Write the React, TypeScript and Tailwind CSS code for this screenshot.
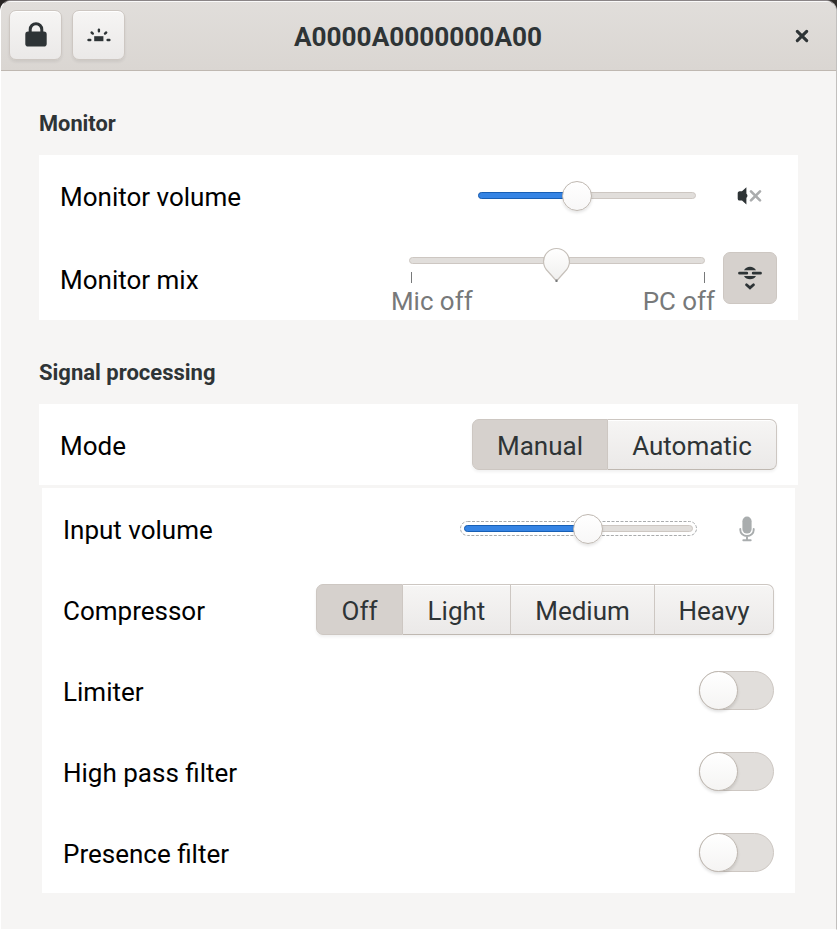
import type { ReactNode } from "react";

const raised =
  "bg-gradient-to-b from-[#f6f5f4] to-[#ebe9e8] border border-[#cdc7c2] shadow-[inset_0_1px_0_#fff,0_2px_3px_rgba(0,0,0,0.07)]";

function LockIcon() {
  return (
    <svg width="22" height="26" viewBox="0 0 22 26" fill="none">
      <path d="M5.2 11V7.5a5.8 5.8 0 0 1 11.6 0V11" stroke="#2e3436" strokeWidth="3" />
      <rect x="0.3" y="9.6" width="21.4" height="15" rx="2.8" fill="#2e3436" />
    </svg>
  );
}

function LightIcon() {
  return (
    <svg width="24" height="14" viewBox="0 0 24 14" fill="none" stroke="#2e3436" strokeWidth="2.4" strokeLinecap="round">
      <rect x="7.2" y="8.2" width="9.2" height="5" fill="#2e3436" stroke="none" />
      <path d="M11.9 1.6v1.6M4.6 4.5l1.2 1.1M19.2 4.5L18 5.6M1.5 12h1.8M20.6 12h1.8" />
    </svg>
  );
}

function CloseIcon() {
  return (
    <svg width="14" height="14" viewBox="0 0 14 14" stroke="#2e3436" strokeWidth="3.1" strokeLinecap="round">
      <path d="M2.3 2.3l9.4 9.4M11.7 2.3l-9.4 9.4" />
    </svg>
  );
}

function MutedIcon() {
  return (
    <svg width="26" height="18" viewBox="0 0 26 18" fill="none">
      <path d="M2.6 4.2H5L9.4.2v17.2L5 13.6H2.6C1.4 13.6.7 12.6.7 11.4V6.4c0-1.2.7-2.2 1.9-2.2z" fill="#2e3436" />
      <path d="M9 6.8c1.9.4 1.9 3.6 0 4z" fill="#2e3436" />
      <path d="M14 4.4l9 9M23 4.4l-9 9" stroke="#aaacad" strokeWidth="2.7" strokeLinecap="round" />
    </svg>
  );
}

function MixIcon() {
  return (
    <svg width="24" height="24" viewBox="0 0 24 24" fill="none" stroke="#2e3436" strokeWidth="2.8" strokeLinecap="round">
      <path d="M6 4.200C7.200 1.900 9.400.700 12 .700S16.800 1.900 18 4.200z" fill="#2e3436" stroke="none" />
      <path d="M6 10c1.200 2.200 3.400 3.300 6 3.300s4.800-1.100 6-3.300z" fill="#2e3436" stroke="none" />
      <path d="M1.500 7.200H8.800M15.200 7.200h7.300" />
      <path d="M8.500 18.800l3.500 3 3.500-3" />
    </svg>
  );
}

function MicIcon() {
  return (
    <svg width="16" height="26" viewBox="0 0 16 26" fill="none">
      <rect x="3.400" y="0.600" width="9.200" height="17" rx="4.600" fill="#a9adae" />
      <path d="M1.300 13v.900a6.700 6.100 0 0 0 13.400 0V13M8 20v4M4.300 24.200h7.400" stroke="#a9adae" strokeWidth="1.900" strokeLinecap="round" />
    </svg>
  );
}

function Track({ width, fill }: { width: string; fill?: string }) {
  return (
    <div className={`${width} relative h-[7px] rounded-full border border-[#cdc7c2] bg-[#e1dedb]`}>
      {fill && (
        <>
          <div className={`${fill} absolute -top-px -left-px h-[7px] rounded-l-full border border-[#185fb4] bg-[#3584e4]`} />
          <div className={`${fill} absolute -top-[12px] -left-px flex justify-end`}>
            <div className="-mr-[15px] size-[30px] shrink-0 rounded-full border border-[#bfb8b1] bg-gradient-to-b from-white to-[#f8f7f7] shadow-[0_2px_3px_rgba(0,0,0,0.1)]" />
          </div>
        </>
      )}
    </div>
  );
}

function Row({ label, children, className = "h-[81px] pr-[21px]" }: { label: string; children: ReactNode; className?: string }) {
  return (
    <div className={`flex items-center pl-[21px] ${className}`}>
      <span className="mr-auto pt-[3px] text-black">{label}</span>
      {children}
    </div>
  );
}

function Segments({ items }: { items: { label: string; width: string }[] }) {
  return (
    <div className="flex h-[51px] rounded-[7px] shadow-[0_2px_3px_rgba(0,0,0,0.06)]">
      {items.map((item, i) => (
        <button
          key={item.label}
          className={`${item.width} border border-[#cdc7c2] pt-[3px] text-center ${i > 0 ? "border-l-0 border-b-[#bfb8b1]" : ""} ${
            i === 0
              ? "rounded-l-[7px] bg-[#d6d1cd]"
              : "bg-gradient-to-b from-[#f6f5f4] to-[#ebe9e8] shadow-[inset_0_1px_0_#fff]"
          } ${i === items.length - 1 ? "rounded-r-[7px]" : ""}`}
        >
          {item.label}
        </button>
      ))}
    </div>
  );
}

function Switch() {
  return (
    <div className="h-[39px] w-[75px] rounded-full border border-[#cdc7c2] bg-[#e1dedb]">
      <div className="-mt-px -ml-px size-[39px] rounded-full border border-[#bfb8b1] bg-gradient-to-b from-white to-[#f5f4f3] shadow-[0_2px_3px_rgba(0,0,0,0.12)]" />
    </div>
  );
}

export default function App() {
  return (
    <div className="h-[930px] w-[837px] overflow-hidden bg-gradient-to-r from-[#2a2625] to-[#302d2a] font-['Roboto',sans-serif] text-[26px] leading-[30px] text-[#2e3436]">
      <div className="flex h-[930px] flex-col overflow-hidden rounded-t-[11px] border-t border-r border-b border-l border-t-[#8a8587] border-r-[#c2c0be] border-b-white border-l-white bg-[#f6f5f4]">
        <header className="flex h-[70px] shrink-0 items-center border-b border-[#bfb8b1] bg-gradient-to-b from-[#e1dedb] to-[#dad6d2] pb-px pl-[8px] shadow-[inset_0_1px_0_#fafafa]">
          <button className={`${raised} flex h-[50px] w-[53px] items-center justify-center rounded-[7px]`}>
            <LockIcon />
          </button>
          <button className={`${raised} ml-[10px] flex h-[50px] w-[53px] items-center justify-center rounded-[7px]`}>
            <LightIcon />
          </button>
          <h1 className="ml-[167px] w-[252px] pt-[3px] text-center text-[26.2px] font-bold whitespace-nowrap">A0000A0000000A00</h1>
          <button className="ml-[251px] pt-px">
            <CloseIcon />
          </button>
        </header>

        <main className="pl-[38px]">
          <h2 className="mt-[38px] text-[21.8px] font-bold">Monitor</h2>
          <section className="mt-[16px] w-[759px] bg-white">
            <Row label="Monitor volume" className="h-[82px] pr-[35px] pb-[2px]">
              <Track width="w-[218px]" fill="w-[99px]" />
              <div className="ml-[41px] pt-px">
                <MutedIcon />
              </div>
            </Row>
            <Row label="Monitor mix" className="h-[83px] pr-[21px] pb-px">
              <div className="mr-[8px] h-[83px] w-[324px] pt-[20px] text-[#77797a]">
                <div className="relative ml-[18px] w-[296px]">
                  <Track width="w-[296px]" />
                  <svg className="absolute -top-[10px] left-[133px]" width="29" height="38" viewBox="0 0 29 38">
                    <defs>
                      <linearGradient id="pin" x1="0" y1="0" x2="0" y2="1">
                        <stop offset="0" stopColor="#fff" />
                        <stop offset="1" stopColor="#f0efee" />
                      </linearGradient>
                    </defs>
                    <path d="M14.500 1.500a13 13 0 0 1 13 13c0 4.500-2 7.500-4.500 10L14.500 34 6 24.500c-2.500-2.500-4.500-5.500-4.500-10a13 13 0 0 1 13-13z" fill="url(#pin)" stroke="#c6c0ba" strokeWidth="1.200" />
                    <path d="M13.500 32.500h2v2.500h-2z" fill="#77797a" />
                  </svg>
                </div>
                <div className="mt-[8px] mr-[10px] ml-[20px] flex justify-between">
                  <span className="h-[11px] w-px bg-[#77797a]" />
                  <span className="h-[11px] w-px bg-[#77797a]" />
                </div>
                <div className="mt-[2px] flex justify-between text-[25.9px] leading-[32px]">
                  <span>Mic off</span>
                  <span>PC off</span>
                </div>
              </div>
              <button className="flex h-[52px] w-[54px] items-center justify-center rounded-[7px] border border-[#cdc7c2] bg-[#d6d1cd]">
                <MixIcon />
              </button>
            </Row>
          </section>

          <h2 className="mt-[38px] text-[22px] font-bold">Signal processing</h2>
          <section className="mt-[16px] w-[759px] bg-white">
            <Row label="Mode">
              <Segments
                items={[
                  { label: "Manual", width: "w-[136px]" },
                  { label: "Automatic", width: "w-[169px]" },
                ]}
              />
            </Row>
          </section>
          <section className="mt-[3px] ml-[3px] w-[753px] bg-white">
            <Row label="Input volume" className="h-[81px] pr-[40px]">
              <div className="relative">
                <svg className="absolute -top-[4px] -left-[4px]" width="237" height="15">
                  <rect x="0.5" y="0.5" width="236" height="14" rx="7" fill="none" stroke="#a9abac" strokeDasharray="3 1.500" />
                </svg>
                <Track width="w-[229px]" fill="w-[124px]" />
              </div>
              <div className="ml-[46px]">
                <MicIcon />
              </div>
            </Row>
            <Row label="Compressor">
              <Segments
                items={[
                  { label: "Off", width: "w-[87px]" },
                  { label: "Light", width: "w-[108px]" },
                  { label: "Medium", width: "w-[144px]" },
                  { label: "Heavy", width: "w-[119px]" },
                ]}
              />
            </Row>
            <Row label="Limiter">
              <Switch />
            </Row>
            <Row label="High pass filter">
              <Switch />
            </Row>
            <Row label="Presence filter">
              <Switch />
            </Row>
          </section>
        </main>
      </div>
    </div>
  );
}
